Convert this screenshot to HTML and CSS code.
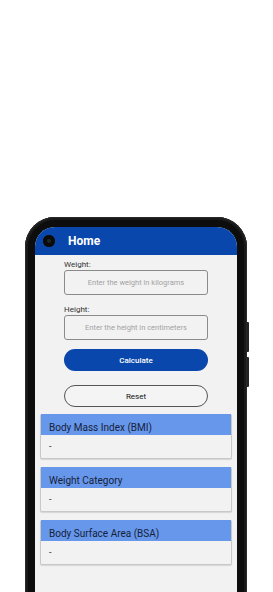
FILE: index.html
```html
<!DOCTYPE html>
<html lang="en">
<head>
    <meta charset="UTF-8">
    <meta name="viewport" content="width=device-width, initial-scale=1.0">
    <title>BMI Calculator</title>
    <link rel="stylesheet" href="styles.css">
</head>
<body>

    <div class="phone">
        <span class="side-key key-up"></span>
        <span class="side-key key-down"></span>
        <div class="screen">
            <header class="app-bar">
                <span class="camera"></span>
                <h1>Home</h1>
            </header>

            <form class="calc-form">
                <label for="weight">Weight:</label>
                <input id="weight" type="text" placeholder="Enter the weight in kilograms">
                <label for="height" class="second">Height:</label>
                <input id="height" type="text" placeholder="Enter the height in centimeters">
                <button type="button" class="btn btn-primary">Calculate</button>
                <button type="reset" class="btn btn-outline">Reset</button>
            </form>

            <div class="result-card">
                <div class="result-title">Body Mass Index (BMI)</div>
                <div class="result-value">-</div>
            </div>
            <div class="result-card">
                <div class="result-title">Weight Category</div>
                <div class="result-value">-</div>
            </div>
            <div class="result-card">
                <div class="result-title">Body Surface Area (BSA)</div>
                <div class="result-value">-</div>
            </div>
        </div>
    </div>

</body>
</html>
```

FILE: styles.css
```css
html, body {
    margin: 0;
    background: #fff;
    overflow: hidden;
}
body {
    font-family: Roboto, "Liberation Sans", sans-serif;
    padding-top: 217px;
    height: 592px;
    box-sizing: border-box;
}
.phone {
    position: relative;
    margin-left: 25px;
    width: 222px;
    height: 390px;
    box-sizing: border-box;
    padding: 10px 10px 0;
    background: #0d0d0d;
    border-radius: 30px 30px 0 0;
    box-shadow: inset 0 0 0 1px #2a2a2a, inset 0 0 0 3px #1a1a1a;
}
.side-key {
    position: absolute;
    right: -2px;
    width: 2px;
    background: #222;
    border-radius: 0 1px 1px 0;
}
.key-up {
    top: 105px;
    height: 30px;
}
.key-down {
    top: 140px;
    height: 30px;
}
.screen {
    height: 100%;
    background: #f2f2f2;
    border-radius: 20px 20px 0 0;
    overflow: hidden;
}
.app-bar {
    height: 28px;
    background: #0a47ad;
    display: flex;
    align-items: center;
    padding-left: 8px;
}
.camera {
    width: 12px;
    height: 12px;
    border-radius: 50%;
    background: #111;
    box-shadow: inset 0 0 0 4px #0b0b0b, inset 0 0 0 6px #1c2a22;
}
.app-bar h1 {
    margin: 0 0 0 13px;
    color: #fff;
    font-size: 12px;
    font-weight: 700;
    line-height: 1;
}
.calc-form {
    display: flex;
    flex-direction: column;
    padding: 5px 29px 0;
}
.calc-form label {
    font-size: 8px;
    font-weight: 400;
    line-height: 10px;
    color: #333;
}
.calc-form label.second {
    margin-top: 10px;
}
.calc-form input {
    height: 25px;
    box-sizing: border-box;
    border: 1px solid #8a8a8a;
    border-radius: 3px;
    background: #f2f2f2;
    font-family: inherit;
    font-size: 7.5px;
    text-align: center;
    padding: 0;
}
.calc-form input::placeholder {
    color: #a2a2a2;
}
.btn {
    height: 22px;
    border-radius: 11px;
    font-family: inherit;
    font-size: 8px;
    padding: 0;
}
.btn-primary {
    margin-top: 9px;
    background: #0a47ad;
    border: none;
    color: #fff;
    font-weight: 500;
}
.btn-outline {
    margin-top: 14px;
    background: #f4f4f4;
    border: 1px solid #555;
    color: #111;
}
.result-card {
    margin: 7px 5px 0;
    border: 1px solid #c8c8c8;
    border-top: none;
    border-radius: 2px;
    box-shadow: 0 1px 1px rgba(0, 0, 0, 0.12);
    background: #f2f2f2;
}
.result-card + .result-card {
    margin-top: 8px;
}
.result-title {
    height: 21px;
    box-sizing: border-box;
    padding: 6px 0 0 8px;
    background: #6797ea;
    color: #16213a;
    font-size: 10px;
    line-height: 15px;
}
.result-value {
    height: 23px;
    padding-left: 8px;
    font-size: 9px;
    line-height: 23px;
    color: #222;
}
```
